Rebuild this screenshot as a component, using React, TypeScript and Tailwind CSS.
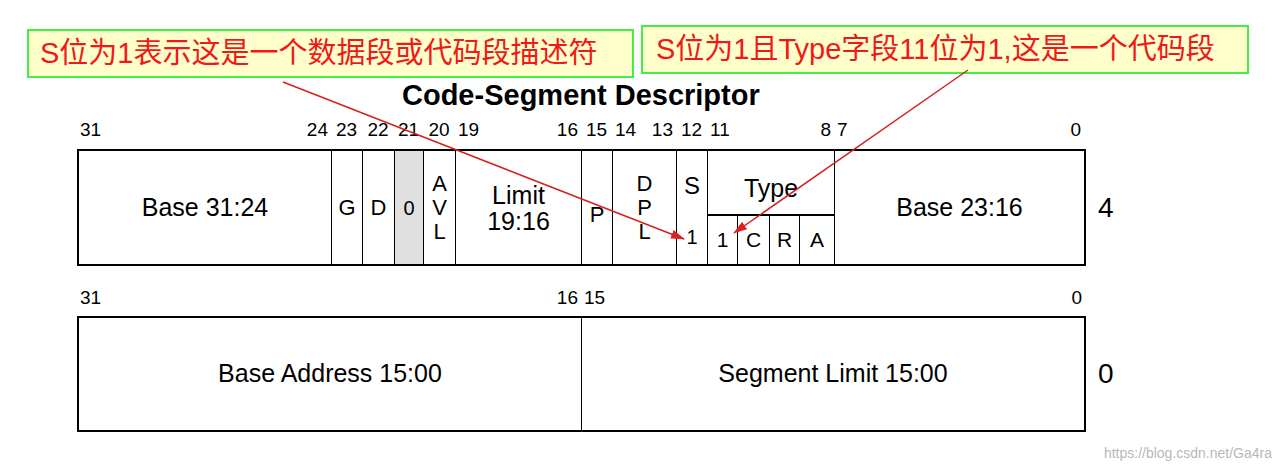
import React from "react";

const F = { fontFamily: '"Liberation Sans", Arial, "Noto Sans CJK SC", sans-serif' };

function Labels({ cols }: { cols: [number, string, string?][] }) {
  return (
    <div className="flex text-[19px] text-black h-[24px] leading-[24px] ml-[77px]">
      {cols.map(([w, a, b], i) => (
        <div key={i} style={{ width: w }} className={`flex px-[3px] ${b !== undefined ? "justify-between" : "justify-center"}`}>
          <span>{a}</span>
          {b !== undefined && <span>{b}</span>}
        </div>
      ))}
    </div>
  );
}

export default function App() {
  return (
    <div style={F} className="relative w-[1280px] h-[472px] bg-white overflow-hidden text-[#111]">
      <div className="flex pt-[25px] h-[80px]">
        <div className="ml-[27px] mt-[4px] w-[607px] h-[49px] border-2 border-[#44ee44] bg-[#ffffcc] flex items-center pl-[11px] text-[29px] text-[#f01818] whitespace-nowrap">
          S位为1表示这是一个数据段或代码段描述符
        </div>
        <div className="ml-[7px] w-[608px] h-[49px] border-2 border-[#44ee44] bg-[#ffffcc] flex items-center pl-[13px] text-[29px] text-[#f01818] whitespace-nowrap overflow-hidden">
          S位为1且Type字段11位为1,这是一个代码段
        </div>
      </div>
      <div className="h-[30px] font-bold text-[29px] leading-[30px] pl-[402px] text-black">Code-Segment Descriptor</div>
      <div className="mt-[8px]">
        <Labels cols={[[254, "31", "24"], [31, "23"], [32, "22"], [29, "21"], [32, "20"], [126, "19", "16"], [31, "15"], [64, "14", "13"], [31, "12"], [127, "11", "8"], [250, "7", "0"]]} />
      </div>
      <div className="flex items-center mt-[7px]">
        <div className="ml-[77px] w-[1009px] h-[117px] border-2 border-black flex text-[25px] text-black">
          <div className="w-[253px] border-r border-black flex items-center justify-center">Base 31:24</div>
          <div className="w-[31px] border-r border-black flex items-center justify-center text-[22px]">G</div>
          <div className="w-[32px] border-r border-black flex items-center justify-center text-[22px]">D</div>
          <div className="w-[29px] border-r border-black bg-[#e0e0e0] flex items-center justify-center text-[20px]">0</div>
          <div className="w-[32px] border-r border-black flex flex-col items-center justify-center leading-[24px] text-[22px]"><span>A</span><span>V</span><span>L</span></div>
          <div className="w-[126px] border-r border-black flex flex-col items-center justify-center leading-[26px]"><span>Limit</span><span>19:16</span></div>
          <div className="w-[31px] border-r border-black flex items-center justify-center pt-[14px] text-[22px]">P</div>
          <div className="w-[64px] border-r border-black flex flex-col items-center justify-center leading-[24px] text-[22px]"><span>D</span><span>P</span><span>L</span></div>
          <div className="w-[31px] border-r border-black flex flex-col items-center justify-between pt-[22px] pb-[14px] text-[24px] leading-[26px]"><span>S</span><span className="text-[20px]">1</span></div>
          <div className="w-[127px] border-r border-black flex flex-col">
            <div className="h-[65px] border-b-2 border-black flex items-center justify-center pt-[12px]">Type</div>
            <div className="flex-1 flex text-[21px]">
              <div className="w-[30px] border-r border-black flex items-center justify-center">1</div>
              <div className="w-[32px] border-r border-black flex items-center justify-center">C</div>
              <div className="w-[30px] border-r border-black flex items-center justify-center">R</div>
              <div className="flex-1 flex items-center justify-center">A</div>
            </div>
          </div>
          <div className="flex-1 flex items-center justify-center">Base 23:16</div>
        </div>
        <div className="ml-[12px] text-[28px] text-black">4</div>
      </div>
      <div className="flex text-[19px] h-[24px] leading-[24px] ml-[77px] mt-[20px] text-black">
        <div className="w-[504px] flex justify-between px-[3px]"><span>31</span><span>16</span></div>
        <div className="w-[504px] flex justify-between px-[3px]"><span>15</span><span>0</span></div>
      </div>
      <div className="flex items-center mt-[6px]">
        <div className="ml-[77px] w-[1009px] h-[116px] border-2 border-black flex text-[25px] text-black">
          <div className="w-[503px] border-r border-black flex items-center justify-center">Base Address 15:00</div>
          <div className="flex-1 flex items-center justify-center">Segment Limit 15:00</div>
        </div>
        <div className="ml-[12px] text-[28px] text-black">0</div>
      </div>
      <div className="absolute right-[8px] bottom-[8px] text-[14px] text-[#b8b8b8]">https://blog.csdn.net/Ga4ra</div>
      <svg className="absolute inset-0 pointer-events-none" width="1280" height="472">
        <defs>
          <marker id="ah" markerWidth="14" markerHeight="9" refX="13" refY="4.5" orient="auto" markerUnits="userSpaceOnUse">
            <path d="M0,0 L14,4.5 L0,9 Z" fill="#e02020" />
          </marker>
        </defs>
        <line x1="283" y1="82" x2="684" y2="239" stroke="#d42020" strokeWidth="1.5" markerEnd="url(#ah)" />
        <line x1="968" y1="70" x2="734" y2="233" stroke="#d42020" strokeWidth="1.5" markerEnd="url(#ah)" />
      </svg>
    </div>
  );
}
